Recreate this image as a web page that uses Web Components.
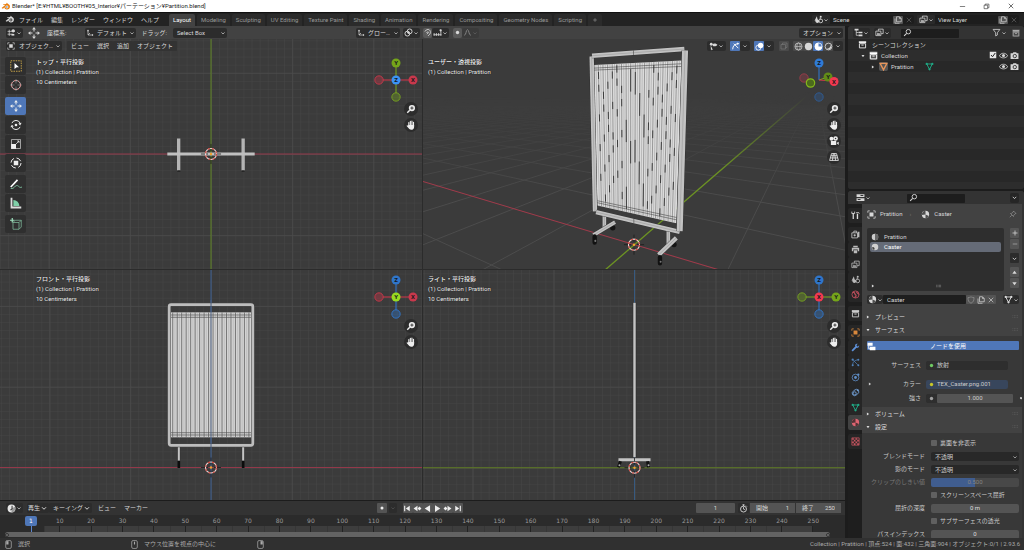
<!DOCTYPE html>
<html lang="ja">
<head>
<meta charset="utf-8">
<title>Blender</title>
<style>
html,body{margin:0;height:100%;background:#1c1c1c}
body{font:6px/10px Roboto,"Noto Sans CJK JP",sans-serif;color:#d8d8d8;overflow:hidden}
</style>
</head>
<body>
<b-app></b-app>
<script>
const ICONS = {
  blender:'<path d="M1 10.5 8 5H4V3.500h6.500L9 2l1-.8 5 4.300c2 3 .5 8-4.500 8-3 0-4.500-2-4.500-4L3.500 12z" fill="currentColor"/><circle cx="10.500" cy="8.800" r="2.600" fill="var(--hole,#232323)"/><circle cx="10.500" cy="8.800" r="1.300" fill="var(--eye,#ddd)"/>',
  down:'<path d="M4 6.500 8 10.500 12 6.500" fill="none" stroke="currentColor" stroke-width="2"/>',
  editor:'<path d="M4 3v11M1 6h13M1 11h9" fill="none" stroke="currentColor" stroke-width="1.300"/><circle cx="11" cy="5" r="3" fill="currentColor"/><path d="M8 12h5" stroke="currentColor" stroke-width="3"/>',
  move:'<path d="M8 0 5.500 3.300h5zM8 16l-2.500-3.300h5zM0 8l3.300-2.500v5zM16 8l-3.300-2.500v5z" fill="currentColor"/><path d="M8 3v3M8 10v3M3 8h3M10 8h3" stroke="currentColor" stroke-width="1.300"/>',
  axes:'<path d="M4 2v10h10M4 12l4-4" fill="none" stroke="currentColor" stroke-width="1.400"/><path d="M2 4.500 4 1l2 3.500zM12 10l3 2-3 2z" fill="currentColor"/>',
  link:'<circle cx="6" cy="10" r="4.300" fill="none" stroke="currentColor" stroke-width="1.700"/><circle cx="10" cy="6" r="4.300" fill="none" stroke="currentColor" stroke-width="1.700"/><circle cx="8" cy="8" r="1.500" fill="currentColor"/>',
  magnet:'<path d="M3 6 7 3c5-2 8 4 5 8l-3 3M6 9l2-2c2-1 2 1 1 2l-2 2" fill="none" stroke="currentColor" stroke-width="1.600"/>',
  snap:'<path d="M1 12h14M2 9v5M6 9v5M10 9v5M14 3v11" stroke="currentColor" stroke-width="1.500"/><circle cx="13.500" cy="4" r="2" fill="currentColor"/>',
  dot:'<circle cx="8" cy="8" r="3" fill="currentColor"/>',
  curve:'<path d="M2 13c4 0 3-10 6-10s2 10 6 10" fill="none" stroke="currentColor" stroke-width="1.600"/>',
  object:'<path d="M4.500 4.500h7v7h-7z" fill="currentColor"/><path d="M1.500 5V1.500H5M11 1.500h3.500V5M14.500 11v3.500H11M5 14.500H1.500V11" fill="none" stroke="currentColor" stroke-width="1.300"/>',
  scene:'<path d="M5 2 1 10h6z" fill="currentColor"/><circle cx="6" cy="11" r="3.200" fill="currentColor"/><path d="M11 4.500v4" stroke="currentColor" stroke-width="1.600"/><circle cx="12" cy="10.500" r="3.300" fill="none" stroke="currentColor" stroke-width="1.500"/><circle cx="12" cy="3" r="1.800" fill="currentColor"/>',
  layers:'<path d="M6 5V2h8.500v8H11" fill="none" stroke="currentColor" stroke-width="1.400"/><path d="M1.500 5.500h9v8h-9z" fill="none" stroke="currentColor" stroke-width="1.400"/><path d="m3 12 2-4 2 2 1-1 1.500 3z" fill="currentColor"/>',
  copy:'<path d="M5 1.500h6l3.500 3.500v6.500H5zM2 5v9.500h9" fill="none" stroke="currentColor" stroke-width="1.400"/><path d="M10.500 1.500v4h4z" fill="currentColor"/>',
  close:'<path d="m3.500 3.500 9 9m0-9-9 9" stroke="currentColor" stroke-width="1.300"/>',
  min:'<path d="M2 8h12" stroke="currentColor" stroke-width="1.300"/>',
  restore:'<path d="M2.500 5h8v8h-8zM5 5V2.500h8.500V11H11" fill="none" stroke="currentColor" stroke-width="1.300"/>',
  tree:'<path d="M4 3v10h4M4 8h4" fill="none" stroke="currentColor" stroke-width="1.300"/><path d="M1 1.500h7v3H1zM8 6.500h7v3H8zM8 11.500h7v3H8z" fill="currentColor"/>',
  search:'<circle cx="9.500" cy="6.500" r="4" fill="none" stroke="currentColor" stroke-width="1.600"/><path d="M6.500 9.500 2 14" stroke="currentColor" stroke-width="1.800"/>',
  filter:'<path d="M2 2.500h12L9.500 8.500v4L6.500 14V8.500z" fill="none" stroke="currentColor" stroke-width="1.400"/>',
  archive:'<path d="M1.500 2h13v3.500h-13z" fill="currentColor"/><path d="M2.500 6.500h11V14h-11z" fill="none" stroke="currentColor" stroke-width="1.600"/><path d="M6 9h4" stroke="currentColor" stroke-width="1.600"/>',
  mesh:'<path d="M3 3.500h10L8 13z" fill="none" stroke="currentColor" stroke-width="1.700"/><circle cx="3" cy="3.500" r="2" fill="currentColor"/><circle cx="13" cy="3.500" r="2" fill="currentColor"/><circle cx="8" cy="13" r="2" fill="currentColor"/>',
  tri:'<path d="M2 2.500h12L8 14z" fill="none" stroke="currentColor" stroke-width="2.400"/>',
  check:'<path d="M1.500 1.500h13v13h-13z" fill="#e6e6e6"/><path d="m4 8 3 3.500L12.500 4" fill="none" stroke="#222" stroke-width="2"/>',
  eye:'<path d="M.5 8.500C4 2.500 12 2.500 15.500 8.500 12 13.500 4 13.500.5 8.500z" fill="none" stroke="currentColor" stroke-width="1.500"/><circle cx="8" cy="8" r="2.700" fill="currentColor"/>',
  camera:'<path d="M1 4h4l1-2h5l1 2h3v10H1z" fill="currentColor"/><circle cx="8.500" cy="9" r="3" fill="none" stroke="#282828" stroke-width="1.500"/>',
  props:'<path d="M1 2h14v5H1zM1 9.500h14V14H1z" fill="currentColor"/><path d="M8 4.500h5M3 11.700h5" stroke="#333" stroke-width="1.800"/>',
  tools:'<path d="M4 4v10" stroke="currentColor" stroke-width="2.200"/><path d="M11.500 5v9" stroke="currentColor" stroke-width="2.400"/><path d="M1.500 1v3.500h5V1M9 3h5l1 1.500" fill="none" stroke="currentColor" stroke-width="1.500"/>',
  render:'<path d="M1.500 5h10v9h-10zM5 5V2h5v3" fill="none" stroke="currentColor" stroke-width="1.600"/><circle cx="6.500" cy="9.500" r="2" fill="currentColor"/><path d="M12 3h3v10h-3z" fill="currentColor"/>',
  printer:'<path d="M4 1.500h8V4H4zM1.500 5h13v6H12V8H4v3H1.500zM5 9.500h6v5H5z" fill="currentColor"/>',
  world:'<circle cx="8" cy="8" r="6.300" fill="none" stroke="currentColor" stroke-width="1.500"/><path d="M3 4c3 0 4 1 4 3s2 1 2 3-1 3-3 3M10 3c0 3 3 2 4 5" fill="none" stroke="currentColor" stroke-width="2"/>',
  wrench:'<path d="m2 14 7-7" stroke="currentColor" stroke-width="3.200"/><path d="M14.500 4 12 6.500 9.500 4 12 1.500C8 .5 6 4 8 7s7 1.500 6.500-3z" fill="currentColor"/>',
  particles:'<path d="M3 13C3 6 7 4 13 3M4 4l8 8" fill="none" stroke="currentColor" stroke-width="1.300"/><circle cx="3" cy="3" r="2" fill="currentColor"/><circle cx="3" cy="13" r="1.800" fill="currentColor"/><circle cx="13" cy="3" r="1.800" fill="currentColor"/><circle cx="13" cy="13" r="1.800" fill="currentColor"/>',
  physics:'<circle cx="8" cy="8" r="6" fill="none" stroke="currentColor" stroke-width="1.400"/><circle cx="8" cy="8" r="2.500" fill="currentColor"/><circle cx="13" cy="3" r="2" fill="currentColor"/>',
  constraint:'<ellipse cx="8" cy="8" rx="6.500" ry="4.600" transform="rotate(-40 8 8)" fill="none" stroke="currentColor" stroke-width="1.500"/><circle cx="6.500" cy="9.500" r="2.800" fill="none" stroke="currentColor" stroke-width="1.700"/><circle cx="12" cy="4" r="1.800" fill="currentColor"/>',
  material:'<circle cx="8" cy="8" r="6.500" fill="currentColor"/><path d="M8 8V1.500A6.500 6.500 0 0 0 1.600 9zM8 8l6 2.500A6.500 6.500 0 0 1 8 14.500z" fill="#222" opacity=".75"/>',
  texture:'<path d="M1.500 1.500h13v13h-13z" fill="none" stroke="currentColor" stroke-width="1.300"/><path d="M2 2h3v3H2zM8 2h3v3H8zM5 5h3v3H5zM11 5h3v3h-3zM2 8h3v3H2zM8 8h3v3H8zM5 11h3v3H5zM11 11h3v3h-3z" fill="currentColor"/>',
  half:'<circle cx="8" cy="8" r="6.500" fill="#ccc"/><path d="M8 1.500a6.500 6.500 0 0 1 0 13z" fill="#666"/>',
  ball:'<circle cx="8" cy="8" r="6.500" fill="#d0d0d0"/><path d="M2 9a3 3 0 0 1 4 5.200A6.500 6.500 0 0 1 2 9z" fill="#444"/>',
  pin:'<path d="m9 2 5 5-2 .5-2.500 3-.5 2.500-6-6 2.500-.5 3-2.500zM5.500 10.500 1.500 14.500" fill="none" stroke="currentColor" stroke-width="1.300"/>',
  shield:'<path d="M8 1.500c2 1.500 4 1.500 6 1.500 0 6-1 9-6 11.500C3 12 2 9 2 3c2 0 4 0 6-1.500z" fill="none" stroke="currentColor" stroke-width="1.300"/>',
  nodes:'<path d="M1 1.500h9v5H1zM5 8.500h10v6H5z" fill="currentColor"/><path d="M3 6v6h3" fill="none" stroke="currentColor" stroke-width="1.500"/>',
  eyeobj:'<path d="M6 4c3-3 8-1 9 1-2 3-6 3-8 2z" fill="currentColor"/><path d="m3 6 4 8-2-.5L3.500 15z" fill="currentColor"/><circle cx="4" cy="4" r="2.500" fill="currentColor"/>',
  gizmo:'<path d="M3 13C3 7 7 3 13 3M5 3l8 8" fill="none" stroke="currentColor" stroke-width="1.700"/><path d="m15 3-4-2v4z" fill="currentColor"/>',
  overlay:'<circle cx="6" cy="10" r="4.500" fill="none" stroke="currentColor" stroke-width="1.500"/><circle cx="10" cy="6" r="4.800" fill="currentColor"/>',
  xray:'<path d="M2 5h9v9H2zM5 5V2h9v9h-3" fill="none" stroke="currentColor" stroke-width="1.400"/>',
  wire:'<circle cx="8" cy="8" r="6.300" fill="none" stroke="currentColor" stroke-width="1.300"/><ellipse cx="8" cy="8" rx="3" ry="6.300" fill="none" stroke="currentColor"/><path d="M2 8h12" stroke="currentColor"/>',
  solid:'<circle cx="8" cy="8" r="6.500" fill="currentColor"/>',
  preview:'<circle cx="8" cy="8" r="6.300" fill="#5680c2" stroke="#fff" stroke-width="1.300"/><path d="M8 1.500V8h6.500A6.500 6.500 0 0 1 8 14.500 6.500 6.500 0 0 1 8 1.500z" fill="#fff"/>',
  rendered:'<circle cx="8" cy="8" r="6" fill="none" stroke="currentColor" stroke-width="1.500"/><path d="M12 5c0 5-4 7-7 7 5 4 10-1 7-7z" fill="currentColor"/>',
  clock:'<circle cx="8" cy="8" r="7" fill="#e6e6e6"/><path d="M8 15a7 7 0 0 0 6-10L8 8z" fill="#999"/><path d="M9 3v5.500L6 11" fill="none" stroke="#333" stroke-width="1.800"/>',
  stopwatch:'<circle cx="8" cy="9" r="5.300" fill="none" stroke="currentColor" stroke-width="1.600"/><path d="M8 9V5.500M6 1.500h4M8 1v3M8 9l2.500 1M12.500 3l1.500 1.500" stroke="currentColor" stroke-width="1.500"/>',
  first:'<path d="M3 3v10" stroke="currentColor" stroke-width="2"/><path d="M12 3v10L5 8z" fill="currentColor"/>',
  prevkey:'<path d="M8 3v10L1 8z" fill="currentColor"/><path d="m11.500 4.500 3.500 3.500-3.500 3.500L8 8z" fill="currentColor"/>',
  playback:'<path d="M12.500 2v12L3 8z" fill="currentColor"/>',
  play:'<path d="M3.500 2v12L13 8z" fill="currentColor"/>',
  nextkey:'<path d="M8 3v10l7-5z" fill="currentColor"/><path d="M4.500 4.500 8 8l-3.500 3.500L1 8z" fill="currentColor"/>',
  last:'<path d="M13 3v10" stroke="currentColor" stroke-width="2"/><path d="M4 3v10l7-5z" fill="currentColor"/>',
  mousel:'<rect x="3" y="1" width="10" height="14" rx="2.500" fill="none" stroke="currentColor" stroke-width="1.300"/><path d="M4 2h4v6H4z" fill="currentColor"/>',
  mousem:'<rect x="3" y="1" width="10" height="14" rx="2.500" fill="none" stroke="currentColor" stroke-width="1.300"/><path d="M7 3h2v5H7z" fill="currentColor"/>',
  mouser:'<rect x="3" y="1" width="10" height="14" rx="2.500" fill="none" stroke="currentColor" stroke-width="1.300"/><path d="M8 2h4v6H8z" fill="currentColor"/>',
  boxselect:'<path d="M1 1h14v14H1z" fill="none" stroke="#e0b64d" stroke-width="1.100" stroke-dasharray="2 1.300"/><path d="m6 4 6 5.500H9L6 12z" fill="#fff"/>',
  cursor:'<circle cx="8" cy="8" r="6" fill="none" stroke="#ddd" stroke-width="1.100"/><circle cx="8" cy="8" r="6" fill="none" stroke="#d66" stroke-width="1.100" stroke-dasharray="2.500 2.500"/><path d="M8 0v6M8 10v6M0 8h6M10 8h6" stroke="#aaa" stroke-width=".7"/>',
  rotate:'<path d="M2.500 5.500a6 6 0 0 1 11 0M13.500 10.500a6 6 0 0 1-11 0" fill="none" stroke="currentColor" stroke-width="1.300"/><path d="m15.500 5-2 3.500-2.500-2.500zM.5 11l2-3.500 2.500 2.500z" fill="currentColor"/><circle cx="8" cy="8" r="1.800" fill="currentColor"/>',
  scale:'<path d="M2 2h12v12H2z" fill="none" stroke="currentColor" stroke-width=".8"/><path d="M1.500 8h6.500v6.500H1.500z" fill="currentColor"/><path d="m8 8 4-4M9.500 4H12v2.500" fill="none" stroke="currentColor"/>',
  transform:'<circle cx="8" cy="8" r="6.700" fill="none" stroke="currentColor" stroke-width="1.300" stroke-dasharray="7 3.500"/><path d="M5 5h6v6H5z" fill="currentColor"/>',
  annotate:'<path d="M1 12 10 2.500" stroke="#fff" stroke-width="2.200"/><path d="M1 14c5 1 5-4 8-4s3 4 7 2" fill="none" stroke="#7fc3a0" stroke-width="1.200"/>',
  measure:'<path d="M2 1v13h13" fill="none" stroke="#ddd" stroke-width="2.400"/><path d="M4.500 4a8 8 0 0 1 8 8h-8z" fill="#7fcfa8"/>',
  cube:'<path d="M4 6h8v9H4zM4 6l3-3h8l-3 3M15 3v9l-3 3" fill="none" stroke="#7fb99b" stroke-width="1"/><path d="M3 0v6M0 3h6" stroke="#9fe0be" stroke-width="1.600"/>',
  zoom:'<circle cx="9.500" cy="6.500" r="5" fill="currentColor"/><path d="M6 10 2 14" stroke="currentColor" stroke-width="2.400"/><path d="M9.500 4v5M7 6.500h5" stroke="#333" stroke-width="1.500"/>',
  hand:'<path d="M4.500 9.500V4M7 8V2M9.500 8V1.800M12 9V3.500" stroke="currentColor" stroke-width="1.800" stroke-linecap="round"/><path d="M3.600 8H13v3c0 3-2 4.500-4.500 4.500S5 14 1 9.500c0-1.500 1.500-1.500 2.600 0z" fill="currentColor"/>',
  movie:'<circle cx="4" cy="4.500" r="3.200" fill="currentColor"/><circle cx="10.500" cy="4" r="3.700" fill="currentColor"/><path d="M3 8h8.500v6.500H3zM12 11l3.500-2v5.500z" fill="currentColor"/><circle cx="10.500" cy="4" r="1.200" fill="#333"/>',
  persp:'<path d="M4 2.500h8l3 11H1zM7 2.500 5.500 13.500M9 2.500l1.500 11M3 6h10M2 9.500h12" fill="none" stroke="currentColor" stroke-width="1.300"/>',
  right:'<path d="m5 4 6 4-6 4z" fill="currentColor"/>',
  open:'<path d="m4 5 4 6 4-6z" fill="currentColor"/>',
  up:'<path d="m3 11 5-7 5 7z" fill="currentColor"/>',
  dn:'<path d="m3 5 5 7 5-7z" fill="currentColor"/>',
  plus:'<path d="M8 3v10M3 8h10" stroke="currentColor" stroke-width="1.500"/>',
  grip:'<path d="M1 6h14M1 10h14" stroke="currentColor" stroke-width="1.300" stroke-dasharray="2 1.500"/>'
};
const BASE = `
*{box-sizing:border-box}
button,input,select{font:inherit;color:inherit;border:0;margin:0;padding:0;background:none;border-radius:1px;outline:0;min-width:0}
button{display:flex;align-items:center;justify-content:center;white-space:nowrap}
select{appearance:none}
.f{flex:1}`;
const def = (name, css, html) => customElements.define(name, class extends HTMLElement {
  connectedCallback(){
    if (this.shadowRoot) return;
    const root = this.attachShadow({mode:'open'});
    root.innerHTML = `<style>${BASE}${css}</style>` + (typeof html === 'function' ? html(this) : html);
  }
});
const ic = (n, s = 9, c = '') => `<b-icon name="${n}" style="--s:${s}px${c ? ';color:' + c : ''}"></b-icon>`;

def('b-icon', ':host{display:block;flex:none;width:var(--s,9px);height:var(--s,9px)}svg{display:block;width:100%;height:100%}',
  el => `<svg viewBox="0 0 16 16" aria-hidden="true">${ICONS[el.getAttribute('name')]}</svg>`);

def('b-title', `:host{display:flex;align-items:center;height:12px;background:#fff;color:#222;padding:0 6px 0 1px;gap:2px}
.w{display:flex;gap:9px}.w button{width:15px}
b-icon{--hole:#fff;--eye:#27558c}`,
`${ic('blender',9,'#e87d0d')}<span class="f">Blender* [E:¥HTML¥BOOTH¥05_Interior¥パーテーション¥Partition.blend]</span>
<div class="w"><button aria-label="最小化">${ic('min',7)}</button><button aria-label="元に戻す">${ic('restore',7)}</button><button aria-label="閉じる">${ic('close',8)}</button></div>`);

def('b-topbar', `:host{display:flex;align-items:center;height:14px;border-top:1px solid #111;background:#232323;padding:0 5px}
nav{display:flex;gap:8px;margin:0 10px 0 5px}
.tabs{display:flex;gap:2px;align-self:flex-end;color:#999}
.tabs button{padding:0 4px;height:12px;background:#2b2b2b;border-radius:2px 2px 0 0}
.tabs .on{background:#424242;color:#fff}
.id{display:flex;align-items:center;height:9px;background:#1d1d1d;border-radius:2px}
.id+.id{margin-left:3px}
.id input{width:63px;padding:0 3px}
.p{display:flex;align-items:center;width:18px;background:#2a2a2a}
.c{width:10px;background:#545454}.x{width:11px;color:#666}`,
`${ic('blender',9)}<nav>${['ファイル','編集','レンダー','ウィンドウ','ヘルプ'].map(t=>`<button>${t}</button>`).join('')}</nav>
<div class="tabs">${['Layout','Modeling','Sculpting','UV Editing','Texture Paint','Shading','Animation','Rendering','Compositing','Geometry Nodes','Scripting'].map((t,i)=>`<button class="${i?'':'on'}">${t}</button>`).join('')}<button aria-label="追加">${ic('plus',6)}</button></div>
<div class="f"></div>
${[['scene','Scene'],['layers','View Layer']].map(([i,t])=>`<div class="id"><button class="p" aria-label="${t}">${ic(i,9)}${ic('down',6)}</button><input aria-label="${t}" value="${t}"><button class="c" aria-label="複製">${ic('copy',8)}</button><button class="x" aria-label="削除">${ic('close',8)}</button></div>`).join('')}`);

def('b-toolheader', `:host{display:grid;grid-template-columns:minmax(0,1fr) auto minmax(0,1fr);align-items:center;height:13px;background:#424242;padding:0 2px 0 6px}
div{display:flex;align-items:center}
.d{height:10px;background:#2c2c2c;border-radius:2px;padding:0 1px}
.m{padding-right:14px}.r{justify-content:flex-end}
.a{margin:0 7px 0 5px}.ax{margin:0 5px 0 19px;width:51px;justify-content:space-between}.sel{margin-left:6px;width:54px;justify-content:space-between;padding-left:4px}
.g{background:#5a5a5a}.n{color:#888}`,
`<div><button class="d" aria-label="エディター">${ic('editor',9)}${ic('down',6)}</button><span class="a">${ic('move',12)}</span><span>座標系:</span>
<button class="d ax">${ic('axes',8)}<span>デフォルト</span>${ic('down',6)}</button><span>ドラッグ:</span><button class="d sel"><span>Select Box</span>${ic('down',6)}</button></div>
<div class="m"><button class="d" style="gap:3px">${ic('axes',8)}<span>グロー…</span>${ic('down',6)}</button><button class="d" style="margin:0 3px" aria-label="ピボット">${ic('link',9)}${ic('down',6)}</button><button class="d g" style="padding:0" aria-label="スナップ">${ic('magnet',9)}</button><button class="d" style="margin-right:4px" aria-label="スナップ先">${ic('snap',9)}${ic('down',6)}</button><button class="d g" style="padding:0" aria-label="プロポーショナル">${ic('dot',9)}</button><button class="d n" style="background:#3b3b3b" aria-label="減衰">${ic('curve',9)}${ic('down',6,'#666')}</button></div>
<div class="r"><button class="d" style="padding-left:4px;gap:3px">オプション${ic('down',6)}</button></div>`);

def('b-vphead', `:host{display:flex;align-items:center;height:14px;padding:0 2px 0 6px}
div{display:flex;align-items:center}
.d{height:10px;background:#2c2c2c;border-radius:2px;padding:0 2px}
.mode{position:relative;margin-right:5px;width:56px}
.mode select{width:100%;height:10px;padding-left:13px;background:#2c2c2c;border-radius:2px}
.mode b-icon{position:absolute;top:1px;left:1px;pointer-events:none}
.mode b-icon:last-child{left:auto;right:1px;top:2px}
.menu button{padding:0 4px;height:10px;background:#333}
.b{background:#4f77b8;color:#fff;height:10px;width:10px}.s{width:10px;height:10px;background:#4a4a4a}`,
el => el.hasAttribute('menus') ? `<div class="mode"><select aria-label="モード"><option>オブジェク…</option></select>${ic('object',8)}${ic('down',6)}</div>
<div class="menu">${['ビュー','選択','追加','オブジェクト'].map(t=>`<button>${t}</button>`).join('')}</div>` :
`<div class="f"></div><div><button class="d" aria-label="可視性">${ic('eyeobj',9)}${ic('down',6)}</button>
<button class="b" style="margin-left:4px" aria-label="ギズモ">${ic('gizmo',9)}</button><button class="d" aria-label="ギズモ設定">${ic('down',6)}</button>
<button class="b" style="margin-left:4px" aria-label="オーバーレイ">${ic('overlay',9)}</button><button class="d" aria-label="オーバーレイ設定">${ic('down',6)}</button>
<button class="s" style="margin:0 4px 0 5px;color:#777" aria-label="透過">${ic('xray',8)}</button>
<button class="s" aria-label="ワイヤー">${ic('wire',9)}</button><button class="s" aria-label="ソリッド">${ic('solid',9)}</button><button class="b" aria-label="プレビュー">${ic('preview',9)}</button><button class="s" aria-label="レンダー">${ic('rendered',9)}</button><button class="d" aria-label="シェーディング">${ic('down',6)}</button></div>`);

def('b-tools', `:host{display:flex;flex-direction:column;gap:3px;width:21px}
div{display:flex;flex-direction:column;gap:1px}
button{height:18px;background:#2f2f2f;border-radius:2px;color:#eee}
.on{background:#4f77b8}`,
[['boxselect','cursor'],['move','rotate','scale','transform'],['annotate','measure'],['cube']].map(g=>`<div>${g.map(n=>`<button class="${n==='move'?'on':''}" aria-label="${n}">${ic(n,12)}</button>`).join('')}</div>`).join(''));

const AX = {x:'#d3374b',y:'#7cab1e',z:'#2f7bd6'};
function gizmo(kind){
  const ball=(x,y,c,t)=>`<circle cx="${x}" cy="${y}" r="4.500" fill="${c}"/><text x="${x}" y="${y+2}" text-anchor="middle" font-size="6" font-weight="700" fill="#15181c">${t}</text>`;
  const ring=(x,y,c)=>`<circle cx="${x}" cy="${y}" r="4.200" fill="${c}" fill-opacity=".35" stroke="${c}" stroke-opacity=".8"/>`;
  const ln=(x,y,c)=>`<path d="M22 22 ${x} ${y}" stroke="${c}"/>`;
  const {x,y,z}=AX;
  if(kind==='top')return ln(39,22,x)+ln(9,22,x)+ln(22,5,y)+ln(22,35,y)+ring(5,22,x)+ring(22,39,y)+ball(39,22,'#c9384c','X')+ball(22,5,'#75a51a','Y')+ball(22,22,'#3b93f5','Z');
  if(kind==='front')return ln(39,22,x)+ln(9,22,x)+ln(22,5,z)+ln(22,35,z)+ring(5,22,x)+ring(22,39,z)+ball(39,22,'#c9384c','X')+ball(22,5,'#2f75c9','Z')+ball(22,22,'#98dc20','Y');
  if(kind==='right')return ln(39,22,y)+ln(9,22,y)+ln(22,5,z)+ln(22,35,z)+ring(5,22,y)+ring(22,39,z)+ball(39,22,'#75a51a','Y')+ball(22,5,'#2f75c9','Z')+ball(22,22,'#f2384f','X');
  return ring(7,20,'#a33b4a')+ring(22,39,'#2d5f9e')+ln(22,8,z)+ln(31,19,y)+ln(37,23,x)+ball(31,19,'#628c17','Y')+ball(22,5,'#2f7bd6','Z')+`<circle cx="13.500" cy="25" r="4.200" fill="#4c6a1c" stroke="#84b81b" stroke-width="1.200"/>`+ball(37,23.5,'#f2384f','X');
}
const cur=(x,y)=>`<g fill="none"><path d="M${x} ${y-10}v7M${x} ${y+3}v7M${x-10} ${y}h7M${x+3} ${y}h7" stroke="#1b1b1b" stroke-width=".8"/><circle cx="${x}" cy="${y}" r="5.500" stroke="#f0dcdc" stroke-width="1.100"/><circle cx="${x}" cy="${y}" r="5.500" stroke="#d2463c" stroke-width="1.100" stroke-dasharray="2.200 2.200"/></g><circle cx="${x}" cy="${y}" r="1.200" fill="#f5a030"/>`;
const grid=(x,y)=>`<defs><pattern id="m" width="8.080" height="8.080" patternUnits="userSpaceOnUse" x="${x}" y="${y}"><path d="M0 0H8.080M0 0V8.080" stroke="#464646" stroke-width="1"/></pattern><pattern id="M" width="80.800" height="80.800" patternUnits="userSpaceOnUse" x="${x}" y="${y}"><path d="M0 .3H80.800M.3 0V80.800" stroke="#4a4a4a" stroke-width="1"/></pattern></defs><rect x="-600" y="-600" width="2400" height="2400" fill="url(#m)"/><rect x="-600" y="-600" width="2400" height="2400" fill="url(#M)"/>`;
const H=(y,c)=>`<path d="M-600 ${y}H1800" stroke="${c}"/>`, V=(x,c,a=-600,b=1800)=>`<path d="M${x} ${a}V${b}" stroke="${c}"/>`;
function perspective(){
  let s='';
  const vg=[1174,59], vr=[-945,59], a=-.149, b=.263;
  const ray=(vp,x,y)=>{const dx=x-vp[0],dy=y-vp[1],k=2400/Math.hypot(dx,dy);return `M${vp[0]} ${vp[1]}L${(vp[0]+dx*k).toFixed(1)} ${(vp[1]+dy*k).toFixed(1)}`;};
  for(let t=-30;t<=5;t++){ if(!t)continue; const x=(632+a*t*vr[0])/(1+a*t), y=525+.2955*(x-632); s+=ray(vg,x,y); }
  for(let t=-2;t<=32;t++){ if(!t)continue; const x=(632+b*t*vg[0])/(1+b*t), y=525-.8605*(x-632); s+=ray(vr,x,y); }
  const L=(p,q,t)=>[Math.round((p[0]+(q[0]-p[0])*t)*10)/10,Math.round((p[1]+(q[1]-p[1])*t)*10)/10];
  const TL=[103,78],TR=[366,64],BL=[114,497],BR=[350,550];
  let st='',dk='';
  for(let i=1;i<38;i++){const p=L(TL,TR,i/38),q=L(BL,BR,i/38);
    st+=`<path d="M${p}L${q}" stroke="${i%2?'#999':'#777'}" stroke-width="${i%2?1.500:2}"/>`;
    if(i%2===0){const o=(i*37%60)/100, mid=i>13&&i<24;
      for(let k=0;k<(mid?2:5);k++){const u=(o+k*(mid?.45:.21))%.93;dk+=`M${L(p,q,u)}L${L(p,q,Math.min(1,u+(mid?.15:.05)))}`;}}}
  const bar=(d,w)=>`<path d="${d}" fill="none" stroke="#2a2a2a" stroke-width="${w}" stroke-linejoin="round"/><path d="${d}" fill="none" stroke="#c2c2c2" stroke-width="${w-2}" stroke-linejoin="round"/><path d="${d}" fill="none" stroke="#888" stroke-width="1.300"/>`;
  return `<defs><linearGradient id="fade" x1="0" y1="92" x2="0" y2="270" gradientUnits="userSpaceOnUse"><stop offset="0" stop-color="#fff" stop-opacity="0"/><stop offset=".25" stop-color="#fff" stop-opacity=".3"/><stop offset=".6" stop-color="#fff"/></linearGradient><mask id="k" maskUnits="userSpaceOnUse" x="0" y="90" width="1400" height="400"><rect x="0" y="90" width="1400" height="400" fill="url(#fade)"/></mask><linearGradient id="gg" x1="806" y1="97" x2="720" y2="171" gradientUnits="userSpaceOnUse"><stop offset="0" stop-color="#6c9322" stop-opacity="0"/><stop offset="1" stop-color="#6c9322"/></linearGradient></defs>
  <g mask="url(#k)"><g transform="translate(424 70) scale(.33333)"><path d="${s}" stroke="#4e4e4e" stroke-width="2.600" fill="none"/></g></g>
  <path d="M400 174.700 760 282" stroke="#a13b4b"/><path d="M590 283.500 808 95.500" stroke="url(#gg)" stroke-width="1.300"/>
  <g transform="translate(560 40) scale(.33333)">
  <circle cx="160" cy="564" r="8" fill="#151515"/><circle cx="343" cy="614" r="8" fill="#151515"/>
  ${bar('M135 525V568',13)}${bar('M326 572V620',13)}${bar('M102 586 167 547',13)}${bar('M297 645 350 594',15)}
  <path d="M106 590v18M301 652v18" stroke="#111" stroke-width="13" stroke-linecap="round"/><circle cx="108" cy="603" r="3" fill="#777"/><circle cx="303" cy="665" r="3" fill="#777"/>
  <path d="M${TL}L${TR}L${BR}L${BL}z" fill="#dcdcdc"/>${st}<path d="${dk}" stroke="#2f2f2f" stroke-width="2.600"/>
  <path d="M103 87 366 74M103 93 366 82M114 483 350 533M114 489 350 540" stroke="#333" stroke-width="1.500"/>
  ${bar('M97 52 107 515',15)}${bar('M110 517 360 576',15)}${bar('M98 50 374 30',15)}${bar('M376 34 360 574',20)}
  <path d="M222 34v14M223 536v14" stroke="#333" stroke-width="1.500"/></g>${cur(634.5,244.8)}`;
}
function frontModel(){
  let s='';
  for(let i=1;i<36;i++){const x=93+i*6.720;s+=`<path d="M${x.toFixed(1)} 127V502" stroke="${i%2?'#777':'#aaa'}" stroke-width="${i%2?3:1.500}"/>`;}
  return `<g transform="translate(140 270) scale(.33333)"><path d="M118 528v42M311 528v42" stroke="#333" stroke-width="9"/><path d="M118 530v42M311 530v42" stroke="#c4c4c4" stroke-width="6"/><path d="M118 572v22M311 572v22" stroke="#0c0c0c" stroke-width="8"/>
  <rect x="93" y="127" width="242" height="375" fill="#d3d3d3"/>${s}<path d="M93 135H335M93 142H335M93 488H335M93 495H335" stroke="#555" stroke-width="2"/>
  <rect x="89" y="104" width="251" height="422" rx="6" fill="none" stroke="#444" stroke-width="11"/><rect x="89" y="104" width="251" height="422" rx="6" fill="none" stroke="#bdbdbd" stroke-width="8"/></g>`;
}
const SCENES={
  top:['0 40 423 229',()=>grid(211.5,154.5)+H(154.5,'#93394a')+V(211.5,'#5f8423')+`<path d="M179.300 139v32M243.500 139v32" stroke="#b4b4b4" stroke-width="3.300"/><path d="M178 171.500h3M242 171.500h3" stroke="#111"/><path d="M168 154.500h87" stroke="#c0c0c0" stroke-width="3"/>`+cur(211.5,154.5)],
  user:['424 40 421 229',perspective],
  front:['0 270 423 230',()=>grid(211.5,467.5)+H(467.5,'#93394a')+V(211.5,'#3a5f93')+frontModel()+V(211.5,'#4a5f80',300,447)+cur(211.5,467.5)],
  right:['424 270 421 230',()=>grid(635,467.5)+H(467.5,'#5f7d23')+V(635,'#375a80')+`<path d="M635 303v154" stroke="#333" stroke-width="4"/><path d="M635 303v154" stroke="#c4c4c4" stroke-width="2.400"/><path d="M619 459.500h32" stroke="#c4c4c4" stroke-width="3"/><path d="M621 461l-2 6M648 461l1 6" stroke="#111" stroke-width="3"/><circle cx="620" cy="465" r="1" fill="#aaa"/><circle cx="649" cy="465" r="1" fill="#aaa"/>`+cur(635,467.5)]
};
def('b-viewport', `:host{display:block;position:relative;overflow:hidden;background:#3b3b3b;min-height:0;min-width:0}
.cv{position:absolute;inset:0;width:100%;height:100%}
.ov{position:relative;display:flex;flex-direction:column;height:100%}
.body{display:flex;align-items:flex-start;flex:1}
.tb{padding:4px 10px 0 5px}
.info{flex:1;padding-top:4px;color:#f2f2f2;line-height:10px;text-shadow:0 0 1px #000}
.in{padding-left:36px}.in4{padding-left:5px}
.side{display:flex;flex-direction:column;align-items:flex-end;padding:5px 4px 0 0;gap:2px}
.giz{display:block;width:44px;height:44px;margin-bottom:-2px}
.side button{width:14px;height:14px;border-radius:50%;background:#2c2c2c;color:#eee}`,
el => {const k=el.getAttribute('kind'),sc=SCENES[k],head=k==='top'||k==='user';
 return `<svg class="cv" viewBox="${sc[0]}" preserveAspectRatio="xMidYMid slice" aria-hidden="true">${sc[1]()}</svg>
<div class="ov">${head?`<b-vphead ${k==='top'?'menus':''}></b-vphead>`:''}<div class="body">${k==='top'?'<div class="tb"><b-tools></b-tools></div>':''}
<div class="info ${k==='front'?'in':k==='top'?'':'in4'}"><slot></slot></div>
<div class="side"><svg class="giz" viewBox="0 0 44 44">${gizmo(k)}</svg>${(k==='user'?['zoom','hand','movie','persp']:['zoom','hand']).map(n=>`<button aria-label="${n}">${ic(n,10)}</button>`).join('')}</div></div></div>`;});

def('b-timeline', `:host{display:block;background:#2b2b2b}
div{display:flex;align-items:center}
.h{height:14px;background:#333;padding:0 4px 0 6px;display:grid;grid-template-columns:minmax(0,1fr) auto minmax(0,1fr)}
.d{height:10px;background:#2c2c2c;border-radius:2px;padding:0 1px}
.menus{gap:4px}.menus .t{padding:0 2px}
.pl{padding-right:8px}
.g{background:#545454;height:10px;width:10px;color:#eee}
.r{justify-content:flex-end}.r input{background:#545454;height:10px;width:39px;text-align:center}
.r label{display:flex;align-items:center;height:10px;background:#545454;padding-left:6px;margin-left:1px;width:45px}
.r label input{width:22px;flex:1;text-align:right;padding-right:6px}
.rule{align-items:flex-start;height:23px;padding-right:16px;font-family:"DejaVu Sans","Noto Sans CJK JP",sans-serif;color:#999;position:relative}
.now{display:flex;flex-direction:column;align-items:center;margin:1px 7px 0 25px;width:12px;color:#fff}
.now b{font-weight:400;background:#4f77b8;border-radius:2px;width:12px;text-align:center;height:10px}
.now i{width:1px;height:7px;background:#5b86d0}
ol{display:grid;grid-template-columns:repeat(25,1fr);flex:1;margin:0;padding:1px 0 0;list-style:none;text-align:center}
li::after{content:"";display:block;height:6px;background:linear-gradient(#232323,#232323) 50% 0/1px 100% no-repeat,linear-gradient(#363636,#363636) 0 0/1px 100% no-repeat,#3d3d3d}
li:last-child::after{margin-right:50%;background:linear-gradient(#232323,#232323) 100% 0/1px 100% no-repeat,#3d3d3d}
.sb{position:absolute;left:5px;right:15px;bottom:1px;height:5px;border-radius:3px;background:#636363;justify-content:space-between}
.sb i{width:4px;height:4px;border:1px solid #333;border-radius:50%;background:#777}`,
`<div class="h"><div class="menus"><button class="d" aria-label="エディター">${ic('clock',9)}${ic('down',6)}</button><div><button class="d">再生${ic('down',8)}</button><button class="d" style="padding-left:4px">キーイング${ic('down',8)}</button></div><button class="t">ビュー</button><button class="t">マーカー</button></div>
<div class="pl"><button class="g" aria-label="自動キー">${ic('dot',8)}</button><button class="d" style="margin:0 6px 0 2px;color:#555" aria-label="キー設定">${ic('down',6)}</button>${['first','prevkey','playback','play','nextkey','last'].map(n=>`<button class="g" aria-label="${n}">${ic(n,9)}</button>`).join('')}</div>
<div class="r"><input aria-label="現在のフレーム" value="1"><button class="d" style="margin-left:3px" aria-label="プレビュー範囲">${ic('stopwatch',9)}</button><label>開始<input value="1"></label><label>終了<input value="250"></label></div></div>
<div class="rule"><span class="now"><b>1</b><i></i></span><ol>${Array.from({length:25},(_,i)=>`<li>${(i+1)*10}</li>`).join('')}</ol><div class="sb"><i></i><i></i></div></div>`);

def('b-outliner', `:host{display:flex;flex-direction:column;background:#282828;border-radius:3px;overflow:hidden;min-height:0}
header{display:flex;align-items:center;height:13px;background:#333;padding:0 4px 0 5px;gap:4px}
.d{height:10px;background:#2a2a2a;border-radius:2px;padding:0 1px}
.se{position:relative;width:58px;height:9px;margin:0 auto 0 6px}
.se input{width:100%;height:9px;background:#1d1d1d;padding-left:12px}
.se b-icon{position:absolute;left:2px;top:0}
ul{margin:0;padding:0;list-style:none;flex:1;background:repeating-linear-gradient(#282828 0 11px,#2d2d2d 11px 22px)}
li{display:flex;align-items:center;height:11px;gap:3px;padding:0 5px 0 12px}
li:first-child{gap:5px;padding-left:10px}
.n2{padding-left:22px}.bx{background:#555;border-radius:2px;color:#fff}
.e{margin-left:auto;display:flex;gap:2px}`,
`<header><button class="d" aria-label="エディター">${ic('tree',9)}${ic('down',6)}</button><button class="d" aria-label="表示モード">${ic('layers',9)}${ic('down',6)}</button>
<div class="se"><input type="text" aria-label="検索">${ic('search',9)}</div><button class="d" aria-label="フィルター" style="background:none">${ic('filter',9)}${ic('down',6)}</button><button aria-label="新規" style="background:#4a4a4a;color:#aaa">${ic('archive',8)}</button></header>
<ul><li>${ic('archive',9,'#eee')}<span>シーンコレクション</span></li>
<li>${ic('open',6)}<span class="bx">${ic('archive',9)}</span><span>Collection</span><span class="e">${ic('check',8)}${ic('eye',9)}${ic('camera',9)}</span></li>
<li class="n2">${ic('right',6)}<span class="bx">${ic('tri',9,'#e8955a')}</span><span>Pratition</span><span style="margin-left:8px">${ic('mesh',9,'#1fa884')}</span><span class="e">${ic('eye',9)}${ic('camera',9)}</span></li></ul>`);

def('b-panel', `:host{display:block;color:#ccc}
h3{display:flex;align-items:center;gap:4px;margin:0;font-weight:400;font-size:6px;height:13px;padding:0 3px;background:#424242;color:#ddd}
h3 b-icon:last-child{margin-left:auto;color:#666}
.c{background:#383838}`,
el=>`<h3>${ic(el.hasAttribute('open')?'open':'right',6)}<span>${el.getAttribute('label')}</span>${ic('grip',7)}</h3>${el.hasAttribute('open')?'<div class="c"><slot></slot></div>':''}`);

def('b-props', `:host{display:flex;flex-direction:column;background:#333;border-radius:3px 3px 0 0;overflow:hidden;min-height:0}
header{display:flex;align-items:center;height:13px;background:#333;padding:0 5px 0 8px}
.d{height:10px;background:#262626;border-radius:2px}
.se{position:relative;width:58px;height:9px;margin:0 auto 0 36px}
.se input{width:100%;height:9px;background:#1d1d1d;padding-left:12px}
.se b-icon{position:absolute;left:2px;top:0}
.m{display:flex;flex:1;min-height:0}
nav{width:14px;background:#1e1e1e;display:flex;flex-direction:column;gap:4px;padding-top:4px;flex:none}
nav div{display:flex;flex-direction:column}
nav button{height:15px;background:#262626;border-radius:2px 0 0 2px}.on{background:#424242!important}
.c{flex:1;background:#424242;min-width:0;overflow:hidden;margin-right:2px}
.bc{display:flex;align-items:center;gap:4px;height:20px;padding:0 5px}
.sl{display:flex;gap:6px;padding:4px 3px 0 5px}
.list{flex:1;background:#2e2e2e;height:63px;border-radius:2px;padding:3px;display:flex;flex-direction:column}
.it{display:flex;align-items:center;gap:5px;height:11px;padding:0 1px;border-radius:2px}
.it.on{background:#656b77!important;color:#fff;height:10px}
.ft{display:flex;align-items:center;margin-top:auto;height:5px}
.bt{display:flex;flex-direction:column;width:9px}
.bt button{height:10px;background:#555;margin-bottom:1px}
.id{display:flex;align-items:center;height:9px;margin:4px 3px 6px 5px}
.id input{flex:1;background:#1e1e1e;height:9px;padding-left:4px}
.id button{height:9px;background:#545454;width:10px}.id .d{background:#2c2c2c;width:16px}
.row{display:grid;grid-template-columns:59px 1fr 6px;align-items:center;height:10px;column-gap:5px;padding-right:3px}
.row.col{grid-template-columns:11px 43px 1fr 6px}
.row.col b-icon{justify-self:end}
.row>label,.row>.lb{text-align:right;white-space:nowrap}
.v{height:9px;background:#2e2e2e;display:flex;align-items:center;gap:1px;padding-left:1px;border-radius:2px}
.row button.v{justify-content:flex-start}
.use{width:calc(100% - 8px);margin:0 3px 0 5px;height:9px;background:#4f77b8;color:#fff;display:grid;grid-template-columns:10px 1fr}
.sur{padding:5px 0 4px}
.sur .row{margin-top:10px}.sur .row+.row{margin-top:9px}.sur .row+.row+.row{margin-top:4px}
.set{display:flex;flex-direction:column;gap:3px;padding-top:5px}
.set .r{display:grid;grid-template-columns:63px 1fr;gap:6px;align-items:center;height:10px;padding-right:3px}
.r>label:first-child{text-align:right;white-space:nowrap}
.r select,.r>input{width:100%;height:9px;border-radius:2px}
.r>input{background:#545454;text-align:center;color:#ddd}
.r .s{position:relative;display:flex}.s select{background:#282828;padding-left:4px}.s b-icon{position:absolute;right:1px;top:2px}
.r>.k{grid-column:2;display:flex;align-items:center;gap:3px}
.k input{appearance:none;width:6px;height:6px;background:#606060}
.dis{color:#777}.r.dis input{background:linear-gradient(90deg,#405d8f 50%,#484848 50%);color:#858585}`,
`<header><button class="d" aria-label="エディター" style="background:none">${ic('props',9)}${ic('down',6)}</button><div class="se"><input type="text" aria-label="検索">${ic('search',9)}</div><button class="d" style="width:9px" aria-label="オプション">${ic('down',7)}</button></header>
<div class="m"><nav>${[[['tools','#ddd']],[['render','#bbb'],['printer','#bbb'],['layers','#bbb'],['scene','#bbb'],['world','#c4505e']],[['archive','#ccc']],[['object','#d9883c'],['wrench','#5f93dc'],['particles','#4f80b8'],['physics','#5f8fc8'],['constraint','#6f9bd0'],['mesh','#1fa884'],['material','#dd6470']],[['texture','#c95560']]].map(g=>`<div>${g.map(([n,c])=>`<button class="${n==='material'?'on':''}" aria-label="${n}">${ic(n,9,c)}</button>`).join('')}</div>`).join('')}</nav>
<div class="c"><div class="bc">${ic('object',9)}<span>Pratition</span><span style="color:#777;margin:0 6px 0 3px">›</span>${ic('material',9)}<span>Caster</span><span class="f"></span>${ic('pin',8,'#999')}</div>
<div class="sl"><div class="list"><div class="it">${ic('half',8)}<span>Pratition</span></div><div class="it on">${ic('ball',8)}<span>Caster</span></div><div class="ft">${ic('right',6)}<span class="f"></span>${ic('grip',6)}<span class="f"></span></div></div>
<div class="bt"><button aria-label="追加">${ic('plus',8)}</button><button aria-label="削除">${ic('min',6)}</button><button style="margin:3px 0 4px;background:#2c2c2c" aria-label="メニュー">${ic('down',7)}</button><button aria-label="上">${ic('up',7)}</button><button aria-label="下">${ic('dn',7)}</button></div></div>
<div class="id"><button class="d" aria-label="マテリアル">${ic('material',9)}${ic('down',6)}</button><input aria-label="名前" value="Caster"><button style="color:#999" aria-label="フェイクユーザー">${ic('shield',8)}</button><button aria-label="複製">${ic('copy',8)}</button><button aria-label="解除">${ic('close',8)}</button><button class="d" style="margin-left:7px" aria-label="データ">${ic('mesh',9)}${ic('down',6)}</button></div>
<b-panel label="プレビュー"></b-panel>
<b-panel label="サーフェス" open><div class="sur"><button class="use">${ic('nodes',9)}<span>ノードを使用</span></button>
<div class="row"><span class="lb">サーフェス</span><button class="v">${ic('dot',9,'#6ec963')}放射</button></div>
<div class="row col">${ic('right',6)}<span class="lb">カラー</span><button class="v" style="background:#38465c">${ic('dot',9,'#c7c729')}TEX_Caster.png.001</button></div>
<div class="row"><label for="st">強さ</label><div class="v">${ic('dot',9,'#a1a1a1')}<input id="st" value="1.000" style="flex:1;height:9px;background:#545454;text-align:center"></div>${ic('dot',6)}</div></div></b-panel>
<b-panel label="ボリューム"></b-panel>
<b-panel label="設定" open><div class="set">
<div class="r"><label class="k"><input type="checkbox">裏面を非表示</label></div>
<div class="r"><label for="bm">ブレンドモード</label><span class="s"><select id="bm"><option>不透明</option></select>${ic('down',6)}</span></div>
<div class="r"><label for="sm">影のモード</label><span class="s"><select id="sm"><option>不透明</option></select>${ic('down',6)}</span></div>
<div class="r dis"><label for="cl">クリップのしきい値</label><input id="cl" value="0.500" disabled></div>
<div class="r"><label class="k"><input type="checkbox">スクリーンスペース屈折</label></div>
<div class="r"><label for="rd">屈折の深度</label><input id="rd" value="0 m"></div>
<div class="r"><label class="k"><input type="checkbox">サブサーフェスの透光</label></div>
<div class="r"><label for="pi">パスインデックス</label><input id="pi" value="0"></div></div></b-panel></div></div>`);

def('b-status', `:host{display:flex;align-items:center;height:12px;background:#303030;color:#aaa;padding:0 4px;white-space:nowrap}
.i{display:flex;align-items:center;gap:5px;width:126px}`,
`<span class="i">${ic('mousel',9)}選択</span><span class="i">${ic('mousem',9)}マウス位置を視点の中心に</span><span class="i">${ic('mouser',9)}</span><span class="f"></span><span>Collection | Pratition | 頂点:524 | 面:432 | 三角面:904 | オブジェクト:0/1 | 2.93.6</span>`);

def('b-app', `:host{display:grid;grid-template-rows:auto auto minmax(0,1fr) auto;height:100vh}
main{display:grid;grid-template-columns:minmax(0,1fr) 176px;gap:3px;min-height:0}
.l{display:grid;grid-template-rows:auto minmax(0,1fr) auto;min-height:0}
.q{display:grid;grid-template-columns:1fr 1fr;grid-template-rows:1fr 1fr;gap:1px;background:#2b2b2b;min-height:0}
b-timeline{margin-top:1px}
.r{display:grid;grid-template-rows:163px minmax(0,1fr);gap:2px;min-height:0}
p{margin:0}b{font-weight:500}`,
`<b-title></b-title><b-topbar></b-topbar>
<main><div class="l"><b-toolheader></b-toolheader><div class="q">
<b-viewport kind="top"><p><b>トップ・平行投影</b></p><p>(1) Collection | Pratition</p><p>10 Centimeters</p></b-viewport>
<b-viewport kind="user"><p><b>ユーザー・透視投影</b></p><p>(1) Collection | Pratition</p></b-viewport>
<b-viewport kind="front"><p><b>フロント・平行投影</b></p><p>(1) Collection | Pratition</p><p>10 Centimeters</p></b-viewport>
<b-viewport kind="right"><p><b>ライト・平行投影</b></p><p>(1) Collection | Pratition</p><p>10 Centimeters</p></b-viewport></div>
<b-timeline></b-timeline></div><div class="r"><b-outliner></b-outliner><b-props></b-props></div></main>
<b-status></b-status>`);
</script>
</body>
</html>
